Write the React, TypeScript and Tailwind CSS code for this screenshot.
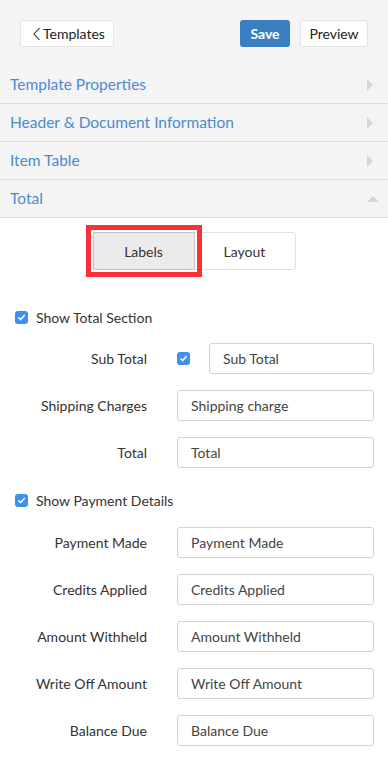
import React from "react";

const Check = () => (
    <span className="w-[13px] h-[13px] rounded-[3px] bg-[#3d8ff2] flex items-center justify-center shrink-0">
        <svg width="9" height="9" viewBox="0 0 9 9" fill="none">
            <path d="M1.8 4.8 L3.7 6.6 L7.3 2.4" stroke="white" strokeWidth="1.5" strokeLinecap="round" strokeLinejoin="round" />
        </svg>
    </span>
);

const AccordionRow = ({ title, open }: { title: string; open?: boolean }) => (
    <div className="h-[38px] flex items-center justify-between pl-[10px] pr-[15px] border-b border-[#dcdcdc]">
        <span className="text-[15.5px] text-[#4a8bd0]">{title}</span>
        {open ? (
            <span className="w-0 h-0 border-l-[6px] border-r-[6px] border-b-[6px] border-l-transparent border-r-transparent border-b-[#d6d6d6] mr-[-6px]" />
        ) : (
            <span className="w-0 h-0 border-t-[6px] border-b-[6px] border-l-[6px] border-t-transparent border-b-transparent border-l-[#d6d6d6]" />
        )}
    </div>
);

const Field = ({ label, value, checkbox }: { label: string; value: string; checkbox?: boolean }) => (
    <div className="flex items-center h-[31px] mb-4 pr-[14px]">
        <div className="w-[147px] text-right text-[14px] text-[#333]">{label}</div>
        <div className="flex-1 ml-[30px] flex items-center">
            {checkbox && (
                <div className="w-[32px] shrink-0">
                    <Check />
                </div>
            )}
            <div className="flex-1 h-[31px] border border-[#d2d2d2] rounded-[3px] flex items-center pl-[13px] text-[14px] text-[#444]">
                {value}
            </div>
        </div>
    </div>
);

export default function App() {
    return (
        <div className="w-[388px] min-h-[771px] bg-white font-['Lato','Liberation_Sans',sans-serif]">
            {/* top bar + accordion */}
            <div className="bg-[#f4f4f4]">
                <div className="flex items-center justify-between pl-5 pr-5 pt-5 pb-[19px]">
                    <button className="h-[27px] w-[94px] bg-white border border-[#e3e3e3] rounded-[3px] flex items-center pl-[12px] text-[14px] text-[#222]">
                        <svg width="8" height="14" viewBox="0 0 8 14" fill="none" className="mr-[2px]">
                            <path d="M6.5 1 L1 7 L6.5 13" stroke="#333" strokeWidth="1.1" />
                        </svg>
                        Templates
                    </button>
                    <div className="flex items-center gap-[10px]">
                        <button className="h-[27px] w-[50px] bg-[#3a7fc1] rounded-[3px] text-white font-bold text-[14px]">Save</button>
                        <button className="h-[27px] w-[68px] bg-white border border-[#e3e3e3] rounded-[3px] text-[14px] text-[#222]">Preview</button>
                    </div>
                </div>
                <AccordionRow title="Template Properties" />
                <AccordionRow title="Header & Document Information" />
                <AccordionRow title="Item Table" />
                <AccordionRow title="Total" open />
            </div>

            {/* tabs */}
            <div className="flex justify-center pt-[14px]">
                <button className="h-[38px] w-[102px] bg-[#ebebeb] border border-[#c4c4c4] text-[14px] text-[#333] outline outline-[5px] outline-[#f8323a] outline-offset-[2px] relative z-10">
                    Labels
                </button>
                <button className="h-[38px] w-[101px] bg-white border border-[#e2e2e2] border-l-0 rounded-r-[3px] text-[14px] text-[#333]">
                    Layout
                </button>
            </div>

            {/* form */}
            <div className="mt-[37px]">
                <div className="flex items-center h-5 pl-[15px] gap-2 mb-4">
                    <Check />
                    <span className="text-[14px] text-[#333]">Show Total Section</span>
                </div>
                <Field label="Sub Total" value="Sub Total" checkbox />
                <Field label="Shipping Charges" value="Shipping charge" />
                <Field label="Total" value="Total" />

                <div className="flex items-center h-5 pl-[15px] gap-2 mt-[22px] mb-[17px]">
                    <Check />
                    <span className="text-[14px] text-[#333]">Show Payment Details</span>
                </div>
                <Field label="Payment Made" value="Payment Made" />
                <Field label="Credits Applied" value="Credits Applied" />
                <Field label="Amount Withheld" value="Amount Withheld" />
                <Field label="Write Off Amount" value="Write Off Amount" />
                <Field label="Balance Due" value="Balance Due" />
            </div>
        </div>
    );
}
